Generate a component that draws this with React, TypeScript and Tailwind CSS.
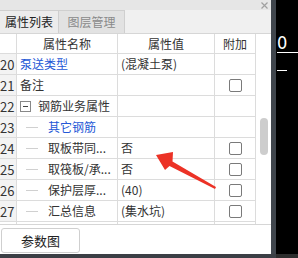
import React from 'react'

const rows = [
  { no: '20', name: '泵送类型', value: '(混凝土泵)', blue: true, check: false },
  { no: '21', name: '备注', value: '', check: true },
  { no: '22', name: '钢筋业务属性', value: '', group: true, check: false },
  { no: '23', name: '其它钢筋', value: '', child: true, blue: true, check: false },
  { no: '24', name: '取板带同...', value: '否', child: true, check: true },
  { no: '25', name: '取筏板/承...', value: '否', child: true, check: true },
  { no: '26', name: '保护层厚...', value: '(40)', child: true, check: true },
  { no: '27', name: '汇总信息', value: '(集水坑)', child: true, check: true },
]

function Checkbox() {
  return <span className="block h-[13px] w-[13px] rounded-[2px] border border-[#7a7a7a] bg-white" />
}

export default function App() {
  return (
    <div className="relative flex h-[258px] w-[298px] overflow-hidden bg-black font-['Noto_Sans_CJK_SC',sans-serif] text-[12px] text-[#333]">
      {/* 属性面板 */}
      <div className="flex h-[254px] w-[271px] flex-col bg-white">
        <div className="flex h-[10px] items-center justify-end bg-[#e6e6e6] pr-[3px]">
          <svg width="7" height="7" viewBox="0 0 7 7" className="mt-[1px]">
            <path d="M0.5 0.5 L6.5 6.5 M6.5 0.5 L0.5 6.5" stroke="#a0a0a0" strokeWidth="1.2" />
          </svg>
        </div>
        <div className="flex h-[24px] items-end border-b border-[#d6d6d6] bg-[#f0f0f0]">
          <div className="flex h-[23px] w-[59px] items-center justify-center border-r border-t border-[#cfcfcf] bg-[#ececec] text-[#222]">
            属性列表
          </div>
          <div className="flex h-[23px] w-[66px] items-center justify-center border-r border-t border-[#cfcfcf] bg-[#e2e2e2] text-[#8a8a8a]">
            图层管理
          </div>
        </div>

        <div className="flex h-[191px] border-b border-[#d6d6d6]">
          <div className="w-[256px]">
            <div className="flex h-[20px] border-b border-[#dcdcdc]">
              <div className="w-[17px] border-r border-[#dcdcdc]" />
              <div className="flex w-[101px] items-center justify-center border-r border-[#dcdcdc]">属性名称</div>
              <div className="flex w-[97px] items-center justify-center border-r border-[#dcdcdc]">属性值</div>
              <div className="flex w-[41px] items-center justify-center border-r border-[#dcdcdc]">附加</div>
            </div>
            {rows.map((r) => (
              <div key={r.no} className="flex h-[21px] border-b border-[#dcdcdc]">
                <div className="flex w-[17px] items-center border-r border-[#dcdcdc] bg-[#f3f3f3] text-[13px] leading-none">
                  {r.no}
                </div>
                <div className="flex w-[101px] items-center border-r border-[#dcdcdc]">
                  {r.group ? (
                    <>
                      <span className="ml-[3px] flex h-[11px] w-[11px] items-center justify-center border border-[#888]">
                        <span className="h-px w-[5px] bg-[#444]" />
                      </span>
                      <span className="ml-[7px]">{r.name}</span>
                    </>
                  ) : r.child ? (
                    <>
                      <span className="ml-[9px] h-px w-[12px] bg-[#d0d0d0]" />
                      <span className={`ml-[10px] ${r.blue ? 'text-[#2457d6]' : ''}`}>{r.name}</span>
                    </>
                  ) : (
                    <span className={`ml-[3px] ${r.blue ? 'text-[#2457d6]' : ''}`}>{r.name}</span>
                  )}
                </div>
                <div className="flex w-[97px] items-center border-r border-[#dcdcdc] pl-[3px]">{r.value}</div>
                <div className="flex w-[41px] items-center justify-center border-r border-[#dcdcdc]">
                  {r.check && <Checkbox />}
                </div>
              </div>
            ))}
            <div className="flex h-[2px]">
              <div className="w-[17px] border-r border-[#dcdcdc]" />
              <div className="w-[101px] border-r border-[#dcdcdc]" />
              <div className="w-[97px] border-r border-[#dcdcdc]" />
              <div className="w-[41px] border-r border-[#dcdcdc]" />
            </div>
          </div>
          <div className="flex flex-1 justify-center pt-[84px]">
            <div className="h-[37px] w-[8px] rounded-full bg-[#cdcdcd]" />
          </div>
        </div>

        <div className="flex flex-1 items-start pl-[1px] pt-[3px]">
          <button className="flex h-[25px] w-[79px] items-center justify-center rounded-[3px] border border-[#cfcfcf] bg-white text-[13px] text-[#222]">
            参数图
          </button>
        </div>
      </div>

      <div className="h-full w-[5px] bg-[#40464d]" />
      <div className="relative flex-1 bg-black">
        <span className="absolute left-[1px] top-[32px] font-['DejaVu_Sans_Condensed','DejaVu_Sans',sans-serif] text-[18px] leading-[22px] text-white">0</span>
        <span className="absolute left-[1px] top-[52px] h-px w-[21px] bg-white" />
        <span className="absolute left-[1px] top-[70px] h-px w-[10px] bg-white" />
      </div>
      <div className="absolute bottom-0 left-0 h-[4px] w-[276px] bg-[#3b3f45]" />
      <div className="absolute bottom-0 right-0 h-[4px] w-[22px] bg-[#2d2d2d]" />

      <svg className="pointer-events-none absolute left-0 top-0" width="298" height="258">
        <polygon
          points="156,155 173,152 172.5,161.5 216,187 215,189 169.5,166 165,170"
          fill="#ec3226"
        />
      </svg>
    </div>
  )
}
